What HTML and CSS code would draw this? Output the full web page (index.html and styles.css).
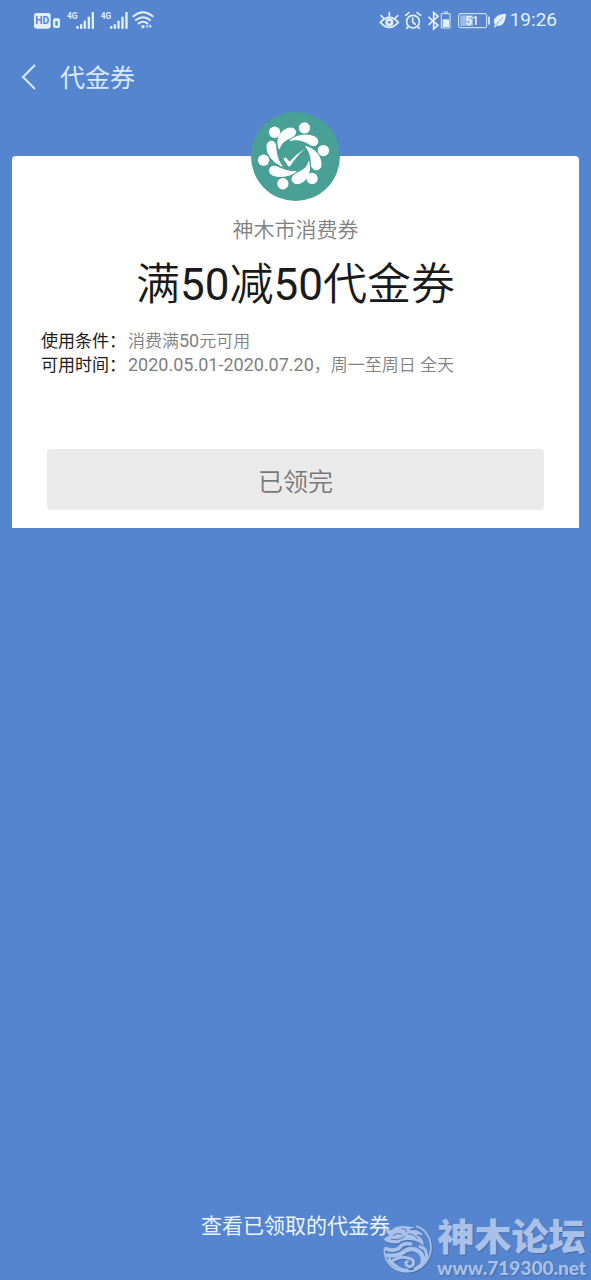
FILE: index.html
```html
<!DOCTYPE html>
<html lang="zh-CN">
<head>
<meta charset="utf-8">
<meta name="viewport" content="width=device-width, initial-scale=1">
<title>代金券</title>
<link rel="stylesheet" href="styles.css">
</head>
<body>
<div class="page">
  <div class="status">
    <svg class="status-left" viewBox="42 30 360 63" aria-hidden="true">
      <rect x="42" y="39" width="50" height="47" rx="7" fill="#e2efff"/>
      <text x="67" y="73" class="hd" text-anchor="middle">HD</text>
      <path fill="#e2efff" fill-rule="evenodd" d="M102 55h12q6 0 6 6v17q0 6-6 6h-9q-6 0-6-6V60zM106 63v14h7V63z"/>
      <text x="141" y="56" class="net">4G</text>
      <g id="bars" fill="#e2efff"><path d="M169 78h7v8h-7zM180 73h7v13h-7zM191 62h7v24h-7zM203 50h7v36h-7zM215 36h7v50h-7z"/></g>
      <text x="242" y="56" class="net">4G</text>
      <use href="#bars" x="101"/>
      <g fill="none" stroke="#e2efff" stroke-width="6" stroke-linecap="round">
        <path d="M340 49Q369 25 398 49M348 60Q369 43 390 60M356 70Q369 60 382 70"/>
      </g>
      <circle cx="369" cy="80" r="5" fill="#e2efff"/>
      <path d="M377 79l6-6v12zM388 73l8 6-8 6z" fill="#e2efff"/>
    </svg>
    <div class="status-right">
      <svg class="status-icons" viewBox="30 30 390 63" aria-hidden="true">
        <g fill="none" stroke="#e2efff" stroke-width="5" stroke-linecap="round">
          <path d="M34 67Q61 37 88 67Q61 97 34 67zM36 47l7 7M61 38v9M86 47l-7 7"/>
          <circle cx="132" cy="65" r="19"/>
          <path d="M131 54v12l8 7M110 46l10-8M144 38l11 8M117 81l-4 4M147 81l4 4"/>
          <path d="M180 52l27 24-13 11V38l13 11-27 24"/>
          <path d="M218 41h25v43h-25zM225 36h11" stroke-width="3"/>
          <rect x="269" y="41" width="84" height="42" rx="5" stroke-width="3"/>
          <path d="M360 52v20"/>
        </g>
        <path d="M61 55a12 12 0 1 0 12 12a12 12 0 0 0-12-12zm0 8a4 4 0 1 1-4 4a4 4 0 0 1 4-4z" fill="#e2efff" fill-rule="evenodd"/>
        <path d="M221 58h19v23h-19z" fill="#e2efff"/>
        <rect x="274" y="46" width="38" height="32" fill="#9dbbea"/>
        <text x="309" y="75" class="charge" text-anchor="middle">51</text>
        <path d="M411 41Q384 42 376 57Q372 65 378 74L374 82L379 82L383 77Q398 80 406 65Q410 56 411 41z" fill="#e2efff"/>
        <path d="M380 75Q390 67 401 52" fill="none" stroke="#5685d0" stroke-width="2"/>
      </svg>
      <span class="time">19:26</span>
    </div>
  </div>

  <header class="bar">
    <button class="back" type="button" aria-label="返回">
      <svg viewBox="0 0 16 26" aria-hidden="true"><path d="M14 1L2 13L14 25" fill="none" stroke="#d9e9ff" stroke-width="2"/></svg>
    </button>
    <h1 class="bar-title">代金券</h1>
  </header>

  <main class="main">
    <section class="card">
      <svg class="logo" viewBox="32 21 268 268" aria-hidden="true">
        <circle cx="166" cy="155" r="134" fill="#48a096"/>
        <g fill="#fff">
          <circle cx="193" cy="69" r="17"/><circle cx="103" cy="82" r="17"/><circle cx="70" cy="166" r="17"/>
          <circle cx="128" cy="237" r="17"/><circle cx="216" cy="221" r="17"/><circle cx="250" cy="137" r="17"/>
        </g>
        <g fill="#fff" stroke="#fff" stroke-width="3" stroke-linejoin="round">
          <path d="M117 132C106 108 118 77 145 70C166 66 172 82 161 93C144 104 126 105 117 132z"/>
          <path d="M149 107C175 85 212 88 229 99C239 113 229 127 213 121C190 106 172 101 149 107z"/>
          <path d="M197 125C226 132 243 155 243 180C242 200 219 199 215 185C213 165 214 148 197 125z"/>
          <path d="M206 170C213 195 205 227 178 236C156 241 149 222 162 210C182 198 200 194 206 170z"/>
          <path d="M168 200C147 217 110 219 93 209C81 196 90 181 106 185C126 192 146 203 168 200z"/>
          <path d="M126 184C96 172 80 149 80 123C83 103 104 106 106 121C108 144 110 165 126 184z"/>
        </g>
        <path d="M129 161L137 158L148 171Q168 148 196 130Q168 155 149 185L144 184z" fill="#fff"/>
      </svg>
      <p class="merchant">神木市消费券</p>
      <h2 class="offer">满<span class="amount">50</span>减<span class="amount">50</span>代金券</h2>
      <dl class="terms">
        <dt>使用条件：</dt><dd>消费满<span class="num">50</span>元可用</dd>
        <dt>可用时间：</dt><dd><span class="num">2020.05.01-2020.07.20</span>，周一至周日 全天</dd>
      </dl>
      <button class="claim" type="button" disabled>已领完</button>
    </section>
  </main>

  <footer class="footer"><a class="received" href="#">查看已领取的代金券</a></footer>

  <div class="watermark">
    <svg class="dragon" viewBox="12 8 156 150" aria-hidden="true">
      <path d="M22 22L40 27Q52 14 76 14L112 18Q98 21 94 27Q124 22 136 43Q122 38 114 41Q140 50 137 74Q122 59 101 57Q76 54 63 65Q45 69 25 61L17 53L34 42L26 34z" fill="#a9c1e9"/>
      <g fill="none" stroke="#a9c1e9" stroke-linecap="round" stroke-linejoin="round">
        <path d="M116 15C150 26 168 66 154 104C144 132 116 152 84 151" stroke-width="5"/>
        <path d="M19 84C18 122 46 150 84 151" stroke-width="5"/>
        <path d="M98 68Q74 64 66 78Q50 92 24 82" stroke-width="11"/>
        <path d="M28 102Q58 106 78 91Q102 75 124 92Q139 104 133 124" stroke-width="13"/>
        <path d="M40 121Q64 104 86 109Q111 113 106 130Q97 141 86 132Q80 123 88 121" stroke-width="9"/>
        <path d="M34 114Q40 128 54 134Q64 146 88 147" stroke-width="9"/>
        <path d="M126 76Q146 80 146 104Q140 129 112 141" stroke-width="9"/>
      </g>
      <g fill="none" stroke="#5478b5" stroke-width="3" stroke-linecap="round">
        <path d="M46 42Q58 33 70 38M40 54Q66 58 80 45M72 22Q92 24 84 32M90 38Q108 36 118 52"/>
      </g>
    </svg>
    <div class="mark-text">
      <span class="mark-name">神木论坛</span>
      <span class="mark-url">www.719300.net</span>
    </div>
  </div>
</div>
</body>
</html>
```
FILE: styles.css
```css
* { box-sizing: border-box; }

body {
  margin: 0;
  background: #5685d0;
  font-family: Roboto, "Noto Sans CJK SC", sans-serif;
}

h1, h2, p, dl, dd { margin: 0; font-weight: 400; }

button { border: 0; padding: 0; font-family: inherit; }

.page {
  position: relative;
  display: flex;
  flex-direction: column;
  min-height: 100vh;
}

.status {
  display: flex;
  justify-content: space-between;
  align-items: center;
  height: 40px;
  padding: 0 34px;
}

.status-left { width: 120px; height: 21px; }
.status-right { display: flex; align-items: center; gap: 1px; }
.status-icons { width: 130px; height: 21px; }
.time { color: #e2efff; font-size: 19px; line-height: 24px; }
.hd { font: 700 31px Roboto, sans-serif; fill: #5685d0; }
.net { font: 700 25px Roboto, sans-serif; fill: #e2efff; }
.charge { font: 500 36px Roboto, sans-serif; fill: #f0f7ff; }

.bar {
  display: flex;
  align-items: center;
  gap: 23px;
  height: 74px;
  padding: 0 21px;
}

.back { display: flex; width: 16px; background: none; cursor: pointer; }
.back svg { width: 16px; height: 26px; }
.bar-title { padding-top: 4px; color: #d9e9ff; font-size: 25px; line-height: 36px; }

.main { flex: 1; padding: 42px 12px 0; }

.card {
  display: flex;
  flex-direction: column;
  align-items: center;
  padding: 0 29px 18px;
  background: #fff;
  border-radius: 4px 4px 0 0;
}

.logo { width: 89px; height: 89px; margin-top: -44px; }

.merchant {
  margin-top: 14px;
  color: #808080;
  font-size: 21px;
  font-weight: 350;
  line-height: 30px;
}

.offer {
  margin-top: 8px;
  color: #1a1a1a;
  font-size: 44px;
  font-weight: 350;
  line-height: 64px;
}

.amount { font-weight: 400; }

.terms {
  display: grid;
  grid-template-columns: 87px 1fr;
  align-self: stretch;
  margin-top: 12px;
  font-size: 17px;
  line-height: 24px;
}

.terms dt { color: #1a1a1a; }
.terms dd { color: #808080; font-weight: 350; }
.num { font-size: 18px; font-weight: 400; }

.claim {
  align-self: stretch;
  height: 61px;
  margin: 72px 6px 0;
  border-radius: 4px;
  background: #eaeaea;
  color: #777;
  font-size: 25px;
  font-weight: 350;
}

.footer { padding-bottom: 38px; text-align: center; }
.received { color: #e9f6ff; font-size: 21px; line-height: 32px; text-decoration: none; }

.watermark {
  position: absolute;
  right: 5px;
  bottom: 2px;
  display: flex;
  align-items: center;
  gap: 3px;
  color: #a9c1e9;
  text-shadow: 1px 1px 1px #456ba9;
}

.dragon { width: 52px; height: 50px; filter: drop-shadow(1px 1px 0 #4a70ae); }
.mark-text { display: flex; flex-direction: column; align-items: center; }
.mark-name { font-size: 37px; font-weight: 900; line-height: 38px; }
.mark-url { font-family: Lato, sans-serif; font-size: 19px; font-weight: 900; line-height: 20px; }
```
